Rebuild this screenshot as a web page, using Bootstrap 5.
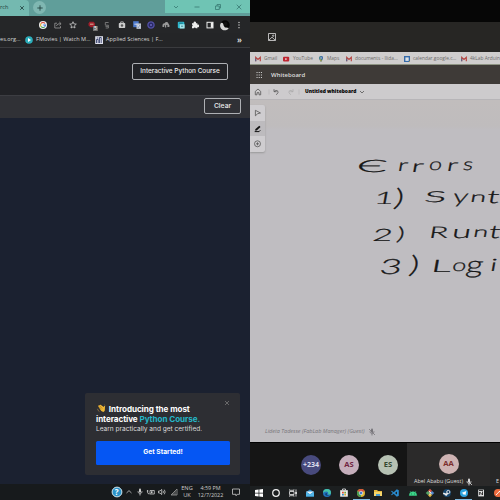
<!DOCTYPE html>
<html lang="en">
<head>
<meta charset="utf-8">
<title>Interactive Python Course</title>
<link href="https://cdn.jsdelivr.net/npm/bootstrap@5.3.0/dist/css/bootstrap.min.css" rel="stylesheet">
<style>
html,body{width:500px;height:500px;overflow:hidden;background:#111}
body{font-family:"Open Sans",sans-serif;font-size:6px;line-height:1}
svg{display:block;flex:none;overflow:visible}
.pane{width:250px;height:500px;overflow:hidden;white-space:nowrap;flex:none}
.ic{width:12px;height:12px}
.ln{fill:none;stroke:currentColor;stroke-width:.8}
/* browser */
.tabs{height:16px;background:#609e9a}
.tab-on{width:29px;height:16px;background:#74b9b0;border-radius:0 4px 0 0;color:#1d3b3a}
.tab-on span{width:19px;font-size:5.6px}
.plus{width:13px;height:13px;border-radius:50%;background:#7fb7b2;margin:1px 0 0 4px;color:#163534}
.winctl{width:85px;height:13px;background:#6fc4b4;color:#397a72}
.winctl div{width:21.3px}
.tools{height:17px;background:#252628;color:#ccc}
.tools .gap1{width:36px}
.tools .gap2{width:5.2px}
.tc{width:14.7px;display:flex;justify-content:center}
.bm{height:15px;background:#242527;color:#d6d6d6;border-bottom:1px solid #3a3b3e;font-size:5.6px;padding-bottom:1px}
.more{margin-right:8px;font-size:8px}
.site-head{height:47px;background:#212226;padding-right:22px}
.ghost{border:1px solid #aeb0b4;border-radius:2px;color:#eee;font-family:Inter,sans-serif;font-weight:500;background:transparent;padding:0;line-height:1}
.course{width:96px;height:17px;font-size:6.4px}
.clear{width:37px;height:16px;font-size:6.8px}
.site-bar{height:23px;background:#303136;border-top:1px solid #3c3d42;padding:0 9px 2px 0}
.editor{height:366px;background:#1b2130;padding:0 10px 9px 0}
.promo{width:155px;height:82px;background:#2d2e33;border-radius:2px;padding:10.5px 10px 0 11px;color:#fff;font-family:Inter,sans-serif}
.promo h6{font-size:8.1px;line-height:10px;font-weight:700;margin:0;letter-spacing:-.06px}
.promo p{font-size:6.55px;line-height:10px;margin:0;color:#ddd}
.wave{display:inline-block;margin-top:-2px}
.shut{margin-top:-4px;color:#777}
.cy{color:#25b7c8}
.go{width:134px;height:24px;background:#0556f3;border:0;border-radius:1.5px;color:#fff;font-size:6.7px;font-weight:700;padding:0;margin-top:7px}
.tray{height:16px;background:#171a1c;color:#ccc;padding-left:111px}
.lang{width:14px;line-height:7.5px;font-size:5.7px}
.clock{width:26px;margin-left:3.5px;line-height:7.5px;font-size:5.4px}
/* meeting */
.black{height:22px;background:#060606}
.mt{height:30px;background:#272624;color:#ddd;padding-left:16px}
.bm2{height:13px;background:#cfcdcd;color:#6d6b6b;border-bottom:1px solid #8d9382;font-size:4.85px;padding-top:1px}
.app{height:19px;background:#3e3a37;color:#ddd;font-size:6px;font-weight:600;padding-top:1px}
.wb{height:16px;background:#cdcbcd;color:#555;border-bottom:1px solid #b7b5b8}
.doc{margin-left:8px;width:51px;font-size:4.9px;color:#000;font-weight:800}
.board{height:342px;background:linear-gradient(#c1bdbd 0,#bfbcbd 26px,#bfbdc1 30px);position:relative}
.pal{width:15px;height:47px;margin-top:5px;background:#cfcdd0;color:#555;box-shadow:0 1px 2px #999;border-radius:0 2px 2px 0}
.pal div{height:15.6px;width:15px}
.pal .sel{background:#bdbbbe}
.ink{position:absolute;left:0;top:0;font-family:Lato,sans-serif;font-weight:300;fill:#161616;stroke:#161616;stroke-width:.25}
.who{color:#77757a;font-size:5.5px;font-style:italic;padding:0 0 4px 15px}
.people{height:44px;background:#151515;border-top:1px solid #000}
.av{width:20px;height:20px;border-radius:50%;font-size:7.6px;font-weight:700;flex:none;display:flex;align-items:center;justify-content:center}
.av-n{margin-left:51px;background:#484a7d;color:#dedeed;font-size:7px}
.av-as{margin-left:18px;background:#c5aebb;color:#71243f}
.av-es{margin-left:19px;background:#b6c1b3;color:#34472e}
.av-aa{background:#ceb3b3;color:#7b2e2d}
.spk{width:83px;height:43px;background:#2b2a2a;margin-left:9px;padding-top:11px;color:#ddd;font-size:5.5px;flex:none}
.nm{height:8px;margin-right:8px}
.rest{width:10px;height:43px;background:#272727;color:#ddd;padding:36px 0 0 6px;font-size:5.5px;flex:none}
.task{height:14px;background:#1c1f20;color:#eee}
.kc{width:17.12px;height:14px;flex:none;display:flex;align-items:center;justify-content:center}
.on{border-bottom:1px solid #7fb9e0}
.f{flex:none}
.w12{width:12px}.w14{width:14px}.w19{width:19px}.w23{width:23px}.w43{width:43px}.w57{width:57px}.w100{width:99px}
.l1{margin-left:1px}.l2{margin-left:2px}.l3{margin-left:3px}.l4{margin-left:4px}.l6{margin-left:6px}.n1{margin-left:-1px}
</style>
<script src="https://cdn.jsdelivr.net/npm/bootstrap@5.3.0/dist/js/bootstrap.bundle.min.js"></script>
</head>
<body>
<svg width="0" height="0" class="position-absolute"><defs>
<g id="gm"><path d="M-2.3 2.2V-1.6L0 .5 2.3-1.6V2.2" fill="none" stroke="#b84743" stroke-width="1.2"/><path d="M-2.3 2.3V-.5" stroke="#53658b" stroke-width="1.1"/></g>
<g id="mic"><rect x="-1" y="-3.5" width="2" height="4.2" rx="1" fill="currentColor"/><path class="ln" d="M-2-.8C-2 2.5 2 2.5 2-.8M0 1.7V3.5"/></g>
</defs></svg>
<div class="d-flex">
<section class="pane">
 <div class="tabs d-flex align-items-start">
  <div class="tab-on d-flex align-items-center"><span class="f">rch</span>
   <svg width="6" height="6" viewBox="-3 -3 6 6"><path class="ln" d="M-1.8-1.8 1.8 1.8M1.8-1.8-1.8 1.8"/></svg></div>
  <div class="plus d-flex align-items-center justify-content-center"><svg width="8" height="8" viewBox="-4 -4 8 8"><path class="ln" d="M-2.7 0H2.7M0-2.7V2.7"/></svg></div>
  <div class="winctl d-flex ms-auto align-items-center">
   <div><svg class="ic mx-auto" viewBox="-6 -6 12 12"><path class="ln" d="M-2-1 0 1 2-1"/></svg></div>
   <div><svg class="ic mx-auto" viewBox="-6 -6 12 12"><path class="ln" d="M-2.5 0H2.5"/></svg></div>
   <div><svg class="ic mx-auto" viewBox="-6 -6 12 12"><path class="ln" d="M-2.5-1H1.3V2.5H-2.5ZM-1-1V-2.5H2.5V1H1.3"/></svg></div>
   <div><svg class="ic mx-auto" viewBox="-6 -6 12 12"><path class="ln" d="M-2.3-2.3 2.3 2.3M2.3-2.3-2.3 2.3"/></svg></div>
  </div>
 </div>
 <div class="tools d-flex align-items-center">
  <div class="gap1"></div>
  <div class="tc"><svg class="ic" viewBox="-6 -6 12 12"><circle r="4" fill="#eee"/><path d="M2-1.5A2.5 2.5 0 0 0-2-1.5" fill="none" stroke="#df4a3c" stroke-width="1.1"/><path d="M-2-1.5A2.5 2.5 0 0 0-2 1.5" fill="none" stroke="#e8b62f" stroke-width="1.1"/><path d="M-2 1.5A2.5 2.5 0 0 0 1.7 1.8" fill="none" stroke="#3e9c57" stroke-width="1.1"/><path d="M1.7 1.8 2.5 0H.3" fill="none" stroke="#4381df" stroke-width="1.1"/></svg></div>
  <div class="tc"><svg class="ic" viewBox="-6 -6 12 12" color="#999"><path class="ln" d="M-1-1.8H-3.2V3H2.5V1.2M-1.5 1C-1-1 .5-1.3 2.8-1.3M1.3-3 3.1-1.3 1.3.3"/></svg></div>
  <div class="tc"><svg class="ic" viewBox="-6 -6 12 12"><path class="ln" d="M0-3.3.9-1.1 3.3-.9 1.5.7 2 3 0 1.8-2 3-1.5.7-3.3-.9-.9-1.1Z"/></svg></div>
  <div class="gap2 f"></div>
  <div class="tc"><svg class="ic" viewBox="-6 -6 12 12"><path d="M-4.5-1.5-3.5-3.2H.5L1.9-1.8V1L.5 2.2H-2.5L-4.5 .6Z" fill="#a11f2b"/><path d="M-3-.8H.5" stroke="#ddb" stroke-width=".8"/><rect y="1" width="4.8" height="5" fill="#747474"/><text x="1" y="5.3" font-size="5" fill="#fff">5</text></svg></div>
  <div class="tc"><svg class="ic" viewBox="-6 -6 12 12" color="#888"><path class="ln" d="M1.6-2.5H-1.7V.2H1.4V3H-1.3M-1.5 1.4H1"/></svg></div>
  <div class="tc"><svg class="ic" viewBox="-6 -6 12 12"><rect x="-3.2" y="-2" width="6.4" height="5" rx=".7" fill="#ccc"/><path class="ln" d="M-1.3-2V-3.1H1.3V-2"/><circle cy=".5" r="1.2" fill="#555"/></svg></div>
  <div class="tc"><svg class="ic" viewBox="-6 -6 12 12"><rect x="-3.8" y="-3.8" width="5.5" height="6" fill="#4c79cd"/><rect x="-.5" y="-1.6" width="4.5" height="5.5" fill="#bbc4d2"/><path d="M-2.6-.8H.2M.8 1H3M2 0V3" stroke="#e6e9f1" stroke-width=".8"/><path d="M1 3 3 0" stroke="#526991" stroke-width=".6"/></svg></div>
  <div class="tc"><svg class="ic" viewBox="-6 -6 12 12"><circle r="3.1" fill="#292966" stroke="#5250a5" stroke-width="1.3"/><circle r="1" fill="#6a67bd"/></svg></div>
  <div class="tc"><svg class="ic" viewBox="-6 -6 12 12" color="#999"><path d="M-3.5 2V0A2 2 0 0 1-1.3-1.8 2 2 0 0 1 2.5-1.2Q4 0 3.4 2H1.4V0H.2V2.5H-1V.2H-1.8V2Z" fill="currentColor"/></svg></div>
  <div class="tc"><svg class="ic" viewBox="-6 -6 12 12"><rect x="-3.2" y="-3.2" width="6.5" height="6.5" rx="1" fill="#2eb7cd"/><rect x="-1.2" y="-.7" width="4.8" height="4.2" fill="#a8e7ec"/><path d="M-1.8-1.8H1.8M0 1.2H2.2" stroke="#155866" stroke-width=".7"/></svg></div>
  <div class="tc"><svg class="ic" viewBox="-6 -6 12 12"><path d="M-3-1.8H-1.3A1.2 1.2 0 1 1 .9-1.8H2.4V-.2A1.2 1.2 0 1 1 2.4 2V3.2H.8A1.1 1.1 0 0 0-1.3 3.2H-3V1.6A1.1 1.1 0 0 0-3-.4Z" fill="#eee"/></svg></div>
  <div class="tc"><svg class="ic" viewBox="-6 -6 12 12"><rect x="-3" y="-2.7" width="6" height="5.6" fill="none" stroke="#eee" stroke-width="1"/><path d="M.8-2.5H3V2.7H.8Z" fill="#eee"/></svg></div>
  <div class="tc"><svg class="ic" viewBox="-6 -6 12 12"><circle r="4.7" fill="#060606"/><path d="M-4.3-1.8A4.7 4.7 0 0 0 3.8 3Q1.8 2.2 0 2.5-1.8.8-1.6-1Q-3-3-4.3-1.8Z" fill="#d6d6d6"/><circle cx=".6" cy="-1" r="2" fill="#111"/></svg></div>
  <div class="tc"><svg class="ic" viewBox="-6 -6 12 12"><path d="M0-2.6V-2.5M0 0V.1M0 2.6V2.7" stroke="#ddd" stroke-width="1.3" stroke-linecap="round"/></svg></div>
 </div>
 <div class="bm d-flex align-items-center">
  <span class="f w23">es.org...</span>
  <svg class="ic" viewBox="-6 -6 12 12"><circle r="3.8" fill="#2baebb"/><path d="M-1-1.9 2 0-1 1.9Z" fill="#fff"/></svg>
  <span class="f w57 l1">FMovies | Watch M...</span>
  <svg class="ic" viewBox="-6 -6 12 12"><rect x="-3.8" y="-3.8" width="7.8" height="7.8" fill="#dfe1ed"/><path d="M-2.5 3V-.5H-.8V3M.5 3V-2.5H2.2V3M-2.2-2H-.6" stroke="#25305d" stroke-width=".8" fill="none"/></svg>
  <span class="f l1">Applied Sciences | F...</span>
  <span class="ms-auto fw-bold more">»</span>
 </div>
 <div class="site-head d-flex align-items-center justify-content-end"><button class="ghost course">Interactive Python Course</button></div>
 <div class="site-bar d-flex align-items-center justify-content-end"><button class="ghost clear">Clear</button></div>
 <div class="editor d-flex align-items-end justify-content-end">
  <div class="promo">
   <div class="d-flex justify-content-between">
    <h6><svg class="wave align-middle" width="11" height="9" viewBox="-5.5 -4.5 11 9"><path d="M-3.4-2.2-.2 2.6Q2.3 4.4 3.3 2.1L3.5-2.1Q2.8-3.5 2.2-1.5L-.9-3.8Q-1.8-4-1.4-2.9L-2.5-3.4Q-3.5-3.2-2.8-2.5Z" fill="#efb735"/><path d="M-1.6-2.6.8.1M-2.6-2-.1.8" stroke="#9e6b22" stroke-width=".5"/><path d="M-4 .3Q-3.8 2.2-2.1 3M3-3.6 3.8-2.9" stroke="#bd9147" stroke-width=".6" fill="none"/></svg> Introducing the most<br>interactive <span class="cy">Python Course.</span></h6>
    <svg class="shut" width="6" height="6" viewBox="-3 -3 6 6"><path class="ln" d="M-2-2 2 2M2-2-2 2"/></svg>
   </div>
   <p>Learn practically and get certified.</p>
   <button class="go">Get Started!</button>
  </div>
 </div>
 <div class="tray d-flex align-items-center">
  <svg class="ic" viewBox="-6 -6 12 12"><circle r="4.9" fill="#2b92c8" stroke="#d1e5ed"/><text x="-2.2" y="2.9" font-size="8" font-weight="700" fill="#fff">?</text></svg>
  <svg class="ic" viewBox="-6 -6 12 12"><path class="ln" d="M-2.5 1 0-1.4 2.5 1"/></svg>
  <svg class="ic n1" viewBox="-6 -6 12 12"><use href="#mic"/></svg>
  <svg class="ic n1" viewBox="-6 -6 12 12"><path class="ln" d="M-1-1.5H3.3V2H-1ZM-3.5-2V0Q-3.5 2-1.5 2M-4.2-1H-2.5"/><path d="M0-.7H1.5V1.2H0Z" fill="currentColor"/></svg>
  <svg class="ic n1" viewBox="-6 -6 12 12"><path class="ln" d="M-3.5-1H-2L-.3-2.6V2.6L-2 1H-3.5ZM1-1.2Q2 0 1 1.2M2.3-2.3Q4 0 2.3 2.3"/></svg>
  <svg class="ic" viewBox="-6 -6 12 12" color="#999"><path class="ln" d="M-3 3H3V-3ZM-1 3V1M1 3V-1"/></svg>
  <div class="lang text-center">ENG<br>UK</div>
  <div class="clock text-center">4:59 PM<br>12/7/2022</div>
  <svg class="ic l6" viewBox="-6 -6 12 12"><path class="ln" d="M-3.5-3H3.5V2.3H1.3L0 3.8V2.3H-3.5Z"/></svg>
 </div>
</section>
<section class="pane">
 <div class="black"></div>
 <div class="mt d-flex align-items-center"><svg class="ic" viewBox="-6 -6 12 12"><path class="ln" d="M-3.5-3.5H3.5V3.5H-3.5ZM-3.2 3.2 0 .2 3.2 3.2"/><circle class="ln" cx="1.2" cy="-1.3" r=".7"/></svg></div>
 <div class="bm2 d-flex align-items-center">
  <svg class="ic l2" viewBox="-6 -6 12 12"><use href="#gm"/></svg>
  <span class="f w14">Gmail</span>
  <svg class="ic l2" viewBox="-6 -6 12 12"><rect x="-3" y="-2.2" width="6.2" height="4.6" rx="1" fill="#bf2430"/><path d="M-.7-1.1 1.3.1-.7 1.2Z" fill="#eee"/></svg>
  <span class="f w19 l1">YouTube</span>
  <svg class="ic l3" viewBox="-6 -6 12 12"><path d="M-2-.9A2 2 0 0 1 2-.9Q2 .8 0 3-2 .8-2-.9Z" fill="#347888"/><path d="M0-2.9A2 2 0 0 1 2-.9L0 .5Z" fill="#456baf"/><path d="M-1.3.7 0 3 .8 1.8-.4 0Z" fill="#b2a14b"/><circle cy="-1" r=".7" fill="#ddd"/></svg>
  <span class="f w12">Maps</span>
  <svg class="ic l4" viewBox="-6 -6 12 12"><use href="#gm"/></svg>
  <span class="f w43">documents - Ilida...</span>
  <svg class="ic l3" viewBox="-6 -6 12 12"><rect x="-3" y="-3" width="6" height="6" fill="#356aa9"/><rect x="-1.6" y="-1.6" width="3.3" height="3.5" fill="#dce1e5"/><path d="M3 1.8 1.8 3H3Z" fill="#cba73e"/></svg>
  <span class="f w43">calendar.google.c...</span>
  <svg class="ic l2" viewBox="-6 -6 12 12"><use href="#gm"/></svg>
  <span class="f">4kLab Arduin</span>
 </div>
 <div class="app d-flex align-items-center"><svg class="ic l3" viewBox="-6 -6 12 12"><path d="M-2.5-2.5H3M-2.5 0H3M-2.5 2.5H3" stroke="#ccc" stroke-width="1.1" stroke-dasharray="1.1 1.1"/></svg><span class="l6">Whiteboard</span></div>
 <div class="wb d-flex align-items-center">
  <svg class="ic l2" viewBox="-6 -6 12 12"><path class="ln" d="M-2.7 2.8V-.6L0-3 2.7-.6V2.8H1V.7H-1V2.8Z"/></svg>
  <svg class="ic l6" viewBox="-6 -6 12 12"><path class="ln" d="M-2-2.8V-.3H.6M-1.8-.5Q.1-2.3 1.7-1.1 3 .5.3 2.8"/><path d="M-7-2.5V2.5" stroke="#b3b1b3" stroke-width=".6"/></svg>
  <svg class="ic l3" color="#aaa" viewBox="-6 -6 12 12"><path class="ln" d="M2-2.8V-.3H-.6M1.8-.5Q-.1-2.3-1.7-1.1-3 .5-.3 2.8"/><path d="M8-2.5V2.5" stroke="#b3b1b3" stroke-width=".6"/></svg>
  <span class="f doc">Untitled whiteboard</span>
  <svg class="ic" viewBox="-6 -6 12 12"><path class="ln" d="M-2-1 0 1 2-1"/></svg>
 </div>
 <div class="board d-flex flex-column">
  <div class="pal">
   <div><svg width="15" height="15.6" viewBox="-7.5 -7.8 15 15.6"><path class="ln" d="M-2.1-2.5 3 .2.2.9-2.1 3Z"/></svg></div>
   <div class="sel"><svg width="15" height="15.6" viewBox="-7.5 -7.8 15 15.6"><path d="M-2.7 1.6-2 .1 1.8-3 3-1.7-.8 1.6Z" fill="#111"/><path d="M-2.8 2.8H1.6L2.8 1.5" stroke="#111" fill="none"/></svg></div>
   <div><svg width="15" height="15.6" viewBox="-7.5 -7.8 15 15.6"><circle class="ln" r="3"/><path class="ln" d="M-1.5 0H1.5M0-1.5V1.5"/></svg></div>
  </div>
  <svg class="ink" width="250" height="200" viewBox="0 99 250 200">
   <g font-size="17" transform="translate(29 0) skewX(-10)">
    <text x="107" y="171" textLength="31" lengthAdjust="spacingAndGlyphs">Є</text>
    <text x="148" y="170" textLength="10" lengthAdjust="spacingAndGlyphs">r</text>
    <text x="162" y="171" textLength="12" lengthAdjust="spacingAndGlyphs">r</text>
    <text x="179" y="169" textLength="13" lengthAdjust="spacingAndGlyphs">o</text>
    <text x="197" y="170" textLength="11" lengthAdjust="spacingAndGlyphs">r</text>
    <text x="213" y="169" textLength="10" lengthAdjust="spacingAndGlyphs">s</text>
   </g>
   <g font-size="17" transform="translate(35 0) skewX(-10)">
    <text x="124" y="203" textLength="20" lengthAdjust="spacingAndGlyphs">1</text>
    <text x="144" y="205" font-size="24" textLength="10" lengthAdjust="spacingAndGlyphs">)</text>
    <text x="174" y="201" font-size="15" textLength="22" lengthAdjust="spacingAndGlyphs">S</text>
    <text x="203" y="202" font-size="19" textLength="15" lengthAdjust="spacingAndGlyphs">y</text>
    <text x="220" y="201" font-size="15" textLength="16" lengthAdjust="spacingAndGlyphs">n</text>
    <text x="237" y="202" font-size="18" textLength="12" lengthAdjust="spacingAndGlyphs">t</text>
   </g>
   <g font-size="17" transform="translate(42 0) skewX(-10)">
    <text x="122" y="240" textLength="20" lengthAdjust="spacingAndGlyphs">2</text>
    <text x="146" y="239" font-size="18" textLength="8" lengthAdjust="spacingAndGlyphs">)</text>
    <text x="178" y="237" font-size="16" textLength="19" lengthAdjust="spacingAndGlyphs">R</text>
    <text x="201" y="237" font-size="18" textLength="19" lengthAdjust="spacingAndGlyphs">u</text>
    <text x="222" y="236" font-size="15" textLength="15" lengthAdjust="spacingAndGlyphs">n</text>
    <text x="238" y="237" font-size="18" textLength="11" lengthAdjust="spacingAndGlyphs">t</text>
   </g>
   <g font-size="17" transform="translate(47 0) skewX(-10)">
    <text x="130" y="273" font-size="21" textLength="22" lengthAdjust="spacingAndGlyphs">3</text>
    <text x="159" y="272" font-size="24" textLength="10" lengthAdjust="spacingAndGlyphs">)</text>
    <text x="181" y="271" textLength="20" lengthAdjust="spacingAndGlyphs">L</text>
    <text x="202" y="270" textLength="14" lengthAdjust="spacingAndGlyphs">o</text>
    <text x="216" y="272" font-size="24" textLength="17" lengthAdjust="spacingAndGlyphs">g</text>
    <text x="240" y="270" textLength="7" lengthAdjust="spacingAndGlyphs">i</text>
   </g>
  </svg>
  <div class="who mt-auto d-flex align-items-center"><span class="f w100">Lideta Tadesse (FabLab Manager) (Guest)</span><svg class="ic l2" viewBox="-6 -6 12 12"><use href="#mic"/><path class="ln" d="M-3-3 3 3"/></svg></div>
 </div>
 <div class="people d-flex align-items-center">
  <div class="av av-n">+234</div>
  <div class="av av-as">AS</div>
  <div class="av av-es">ES</div>
  <div class="spk d-flex flex-column align-items-center"><div class="av av-aa">AA</div>
   <div class="nm d-flex align-items-center mt-auto"><span>Abel Ababu (Guest)</span><svg class="ic" viewBox="-6 -6 12 12"><use href="#mic"/><path class="ln" d="M0 0 3 3"/></svg></div></div>
  <div class="rest">E</div>
 </div>
 <div class="task d-flex">
  <div class="kc"><svg class="ic" viewBox="-6 -6 12 12"><path d="M-4-3-.4-3.5V-.3H-4ZM.3-3.6 4-4V-.3H.3ZM-4 .4H-.4V3.5L-4 3ZM.3.4H4V4L.3 3.6Z" fill="#fff"/></svg></div>
  <div class="kc"><svg class="ic" viewBox="-6 -6 12 12"><circle r="3.3" fill="none" stroke="#eee" stroke-width="1.2"/></svg></div>
  <div class="kc"><svg class="ic" viewBox="-6 -6 12 12"><path class="ln" d="M-3.5-1.5H1V1.5H-3.5ZM-3.5-3.6V-2.7H1V-3.6M-3.5 3.6V2.7H1V3.6M3-3.6V3.6"/><path d="M2.3-1H3.8V1H2.3Z" fill="#eee"/></svg></div>
  <div class="kc"><svg class="ic" viewBox="-6 -6 12 12"><path d="M-4-1 0-3.5 4-1V3.5H-4Z" fill="#268acb"/><path d="M-4-1.4H4L0 1.2Z" fill="#e7f2f7"/><path d="M-4-1 0 1.4 4-1V3.5H-4Z" fill="#50b5e8"/></svg></div>
  <div class="kc"><svg class="ic" viewBox="-6 -6 12 12"><circle r="4" fill="#2173ba"/><path d="M-4 0A4 4 0 0 1 4 0Q4 2 1 1.5 2-1.5-1-1.5-3-1.4-4 0Z" fill="#46c2a6"/><path d="M0 0Q-1 3 3 2.7-1 4-2 1.3-1.5-.2 0 0Z" fill="#133f73"/></svg></div>
  <div class="kc"><svg class="ic" viewBox="-6 -6 12 12"><rect x="-3.8" y="-2.8" width="7.6" height="6.5" fill="#eee"/><path class="ln" d="M-1.5-3V-4H1.5V-3"/><path d="M-2-1.2H-.2V.5H-2Z" fill="#dc523b"/><path d="M.3-1.2H2V.5H.3Z" fill="#75a83b"/><path d="M-2 1H-.2V2.6H-2Z" fill="#2d8bc9"/><path d="M.3 1H2V2.6H.3Z" fill="#dfaa2c"/></svg></div>
  <div class="kc on"><svg class="ic" viewBox="-6 -6 12 12"><circle r="4" fill="#dfb534"/><path d="M0 0-3.5-2A4 4 0 0 1 3.5-2Z" fill="#d94b3b"/><path d="M0 0-3.5-2A4 4 0 0 0 0 4Z" fill="#3d994f"/><circle r="1.8" fill="#467dce" stroke="#eee" stroke-width=".7"/></svg></div>
  <div class="kc"><svg class="ic" viewBox="-6 -6 12 12"><path d="M-4-3H-1L0-2H4V3H-4Z" fill="#e5b941"/><path d="M-4-1H4V3H-4Z" fill="#f6d66c"/><path d="M-2 1H2V3H-2Z" fill="#4a9bd2"/></svg></div>
  <div class="kc"><svg class="ic" viewBox="-6 -6 12 12"><path d="M1.8-3.8 3.8-2.8V2.8L1.8 3.8-1.3.8-3.2 2.3-4 1.8-2.2 0-4-1.8-3.2-2.3-1.3-.8ZM2-1.6 0 0 2 1.6Z" fill="#298bce" fill-rule="evenodd"/></svg></div>
  <div class="kc"><svg class="ic" viewBox="-6 -6 12 12"><path d="M-3.7 2.4A3.7 3.7 0 0 1 3.7 2.4ZM-2-.5-3-2M2-.5 3-2" fill="#3bd58a" stroke="#3bd58a" stroke-width=".5"/><circle cx="-1.5" cy=".9" r=".4"/><circle cx="1.5" cy=".9" r=".4"/></svg></div>
  <div class="kc"><svg class="ic" viewBox="-6 -6 12 12"><g transform="rotate(45)"><path d="M-3-3H0V0H-3Z" fill="#d65647"/><path d="M0-3H3V0H0Z" fill="#5689cb"/><path d="M0 0H3V3H0Z" fill="#ddb640"/><path d="M-3 0H0V3H-3Z" fill="#55a568"/></g><path d="M-1-2 0-1V2M0-1 1.5.4" stroke="#fff" stroke-width=".8" fill="none"/></svg></div>
  <div class="kc"><svg class="ic" viewBox="-6 -6 12 12"><circle r="3.9" fill="#17476e"/><circle cx="1.3" cy="-1" r="1.6" fill="#1b4065" stroke="#eee" stroke-width=".9"/><path d="M-3.8.3-1 1.5 1 .4" stroke="#eee" stroke-width="1.5" fill="none"/><circle cx="-.8" cy="1.7" r="1.1" fill="#eee"/></svg></div>
  <div class="kc on"><svg class="ic" viewBox="-6 -6 12 12"><circle r="4" fill="#2ba2dd"/><path d="M-2.6 0 2.3-2 1.4 2.2-.2 1-1 1.9-1 .4Z" fill="#fff"/></svg></div>
  <div class="kc"><svg class="ic" viewBox="-6 -6 12 12"><rect x="-2.8" y="-3.4" width="5.8" height="6.8" fill="#ddd"/><path d="M-1.3 2V-1L1.5 2V-1.5M-2-2.5H2" stroke="#222" stroke-width=".9" fill="none"/></svg></div>
  <div class="kc"><svg class="ic" viewBox="-6 -6 12 12"><circle r="4" fill="#ed6b3e"/><path d="M-2 2 1.8-2M1-1.8 2.3-.8" stroke="#fff" stroke-width=".9"/></svg></div>
 </div>
</section>
</div>
</body>
</html>
